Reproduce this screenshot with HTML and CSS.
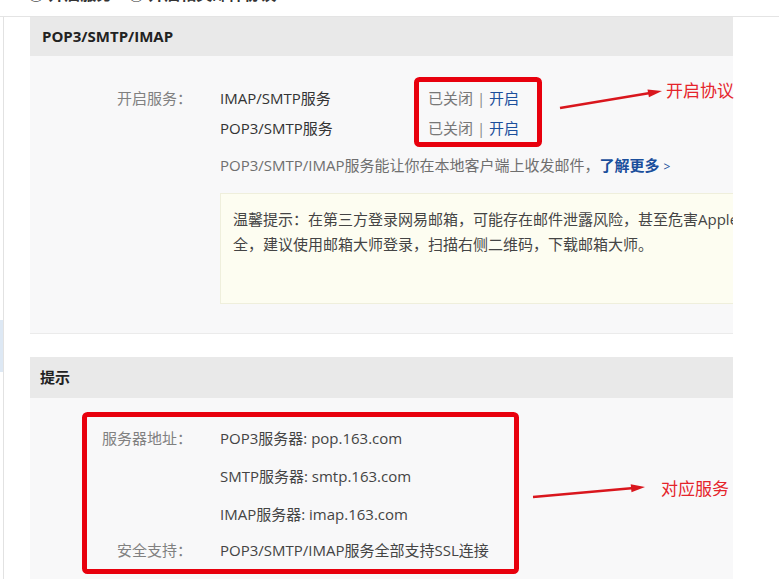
FILE: index.html
```html
<!DOCTYPE html>
<html lang="zh-CN">
<head>
<meta charset="utf-8">
<title>POP3/SMTP/IMAP</title>
<link rel="stylesheet" href="styles.css">
</head>
<body>
<div class="top"><div class="top-text">① 开启服务　② 开启相关邮件协议</div></div>
<div class="main">
  <div class="rail"><div class="rail-mark"></div></div>
  <div class="content">
    <section class="panel">
      <div class="panel-head">POP3/SMTP/IMAP</div>
      <div class="panel-body pb1">
        <div class="row">
          <div class="label">开启服务：</div>
          <div class="value">
            <div class="svc"><span class="svc-name">IMAP/SMTP服务</span><span class="status">已关闭 <span class="sep">|</span> <a class="link">开启</a></span></div>
            <div class="svc"><span class="svc-name">POP3/SMTP服务</span><span class="status">已关闭 <span class="sep">|</span> <a class="link">开启</a></span></div>
          </div>
        </div>
        <div class="desc">POP3/SMTP/IMAP服务能让你在本地客户端上收发邮件，<a class="more">了解更多 <span class="gt">&gt;</span></a></div>
        <div class="tip">温馨提示：在第三方登录网易邮箱，可能存在邮件泄露风险，甚至危害Apple ID安<br>全，建议使用邮箱大师登录，扫描右侧二维码，下载邮箱大师。</div>
      </div>
    </section>
    <section class="panel panel2">
      <div class="panel-head">提示</div>
      <div class="panel-body pb2">
        <div class="row2">
          <div class="label">服务器地址：</div>
          <div class="value2">
            <div class="line">POP3服务器: pop.163.com</div>
            <div class="line">SMTP服务器: smtp.163.com</div>
            <div class="line">IMAP服务器: imap.163.com</div>
          </div>
        </div>
        <div class="row2 last">
          <div class="label">安全支持：</div>
          <div class="value2"><div class="line">POP3/SMTP/IMAP服务全部支持SSL连接</div></div>
        </div>
      </div>
    </section>
  </div>
</div>
<svg class="annot" width="779" height="579" viewBox="0 0 779 579" xmlns="http://www.w3.org/2000/svg">
  <rect x="416.5" y="79.5" width="123" height="65" rx="3" fill="none" stroke="#e8000d" stroke-width="5"/>
  <rect x="84.5" y="414.5" width="432" height="157" rx="3" fill="none" stroke="#e8000d" stroke-width="5"/>
  <line x1="560" y1="108" x2="650" y2="93" stroke="#d9161d" stroke-width="2.5"/>
  <polygon points="662,91 648.9,97.2 647.5,89.4" fill="#d9161d"/>
  <line x1="533" y1="497" x2="634" y2="488" stroke="#d9161d" stroke-width="2.5"/>
  <polygon points="645,487 631.5,492.2 630.7,484.3" fill="#d9161d"/>
</svg>
<span class="note note1">开启协议</span>
<span class="note note2">对应服务</span>
</body>
</html>
```
FILE: styles.css
```css
html, body {
  margin: 0;
  padding: 0;
  background: #ffffff;
}
body {
  width: 779px;
  height: 579px;
  overflow: hidden;
  position: relative;
  font-family: "Open Sans", "Noto Sans CJK SC", sans-serif;
  font-size: 15px;
  color: #333333;
}
.top {
  height: 16px;
  overflow: hidden;
  border-bottom: 1px solid #e4e4e4;
}
.top-text {
  margin-top: -18px;
  margin-left: 28px;
  line-height: 24px;
  font-size: 16px;
  font-weight: 700;
  color: #333;
}
.main {
  display: flex;
  align-items: stretch;
  height: 562px;
}
.rail {
  width: 3px;
  border-right: 1px solid #e2e2e2;
  margin-right: 26px;
}
.rail-mark {
  margin-top: 303px;
  height: 52px;
  background: #dde8f4;
}
.content {
  width: 703px;
  overflow: hidden;
}
.panel-head {
  background: #e9e9e9;
  font-weight: 700;
  color: #222;
  padding-left: 12px;
  height: 39px;
  line-height: 38px;
  font-size: 15px;
}
.panel-body {
  background: #f8f8f9;
}
.pb1 {
  padding: 27px 0 29px;
  border-bottom: 1px solid #ebebeb;
}
.row {
  display: grid;
  grid-template-columns: 162px 1fr;
  column-gap: 28px;
}
.label {
  text-align: right;
  color: #808080;
  line-height: 30px;
  white-space: nowrap;
}
.svc {
  display: flex;
  line-height: 30px;
}
.svc-name {
  width: 208px;
  color: #333;
}
.status {
  color: #777;
}
.sep {
  color: #888;
}
.link {
  color: #1b4f9c;
}
.desc {
  margin: 7px 0 0 190px;
  line-height: 30px;
  color: #6f6f6f;
  white-space: nowrap;
}
.more {
  color: #1b4f9c;
  font-weight: 700;
}
.gt {
  font-weight: 400;
  font-size: 12px;
}
.tip {
  margin: 11px 0 0 190px;
  width: 620px;
  background: #fdfdf1;
  border: 1px solid #efefdc;
  padding: 13px 12px 46px;
  line-height: 25px;
  font-size: 15px;
  color: #444;
  white-space: nowrap;
}
.panel2 {
  margin-top: 23px;
}
.panel2 .panel-head {
  height: 41px;
  line-height: 40px;
  padding-left: 10px;
}
.pb2 {
  padding: 21px 0 20px;
}
.row2 {
  display: grid;
  grid-template-columns: 162px 1fr;
  column-gap: 28px;
}
.row2 .label {
  line-height: 38px;
}
.line {
  line-height: 38px;
  color: #444;
  white-space: nowrap;
}
.row2.last .label,
.row2.last .line {
  line-height: 34px;
}
.annot {
  position: absolute;
  left: 0;
  top: 0;
  pointer-events: none;
}
.note {
  position: absolute;
  font-family: "Noto Sans CJK SC", sans-serif;
  font-size: 17px;
  line-height: 20px;
  color: #e5242b;
  white-space: nowrap;
}
.note1 {
  left: 666px;
  top: 80px;
}
.note2 {
  left: 661px;
  top: 478px;
}
```
